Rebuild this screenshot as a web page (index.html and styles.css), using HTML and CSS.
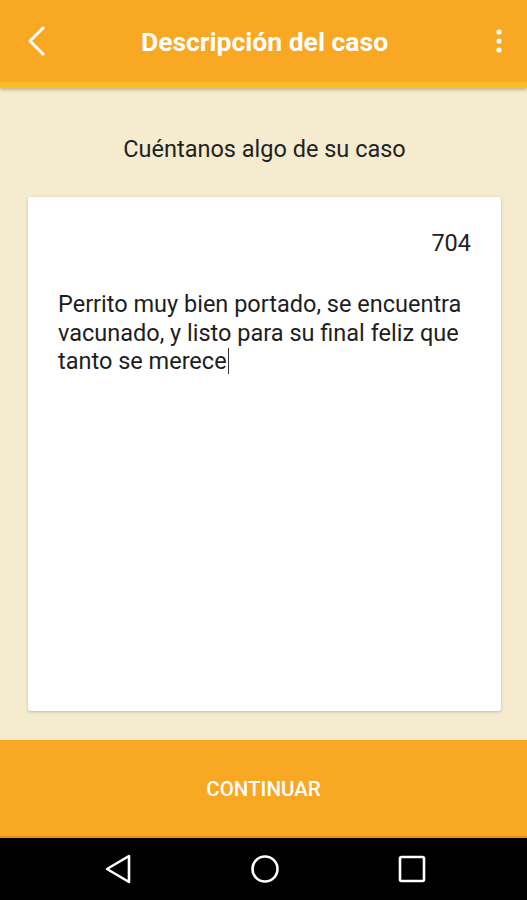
FILE: index.html
```html
<!DOCTYPE html>
<html lang="es">
<head>
    <meta charset="UTF-8">
    <meta name="viewport" content="width=device-width, initial-scale=1.0">
    <title>Descripción del caso</title>
    <link rel="stylesheet" href="styles.css">
</head>
<body>
    <div class="app">
        <header class="toolbar">
            <button class="icon-btn back" aria-label="Atrás">
                <svg width="22" height="30" viewBox="0 0 22 30">
                    <polyline points="17,2 4,15 17,28" fill="none" stroke="#fff" stroke-width="3" stroke-linecap="round" stroke-linejoin="round"/>
                </svg>
            </button>
            <h1 class="title">Descripción del caso</h1>
            <button class="icon-btn more" aria-label="Más opciones">
                <svg width="8" height="26" viewBox="0 0 8 26">
                    <circle cx="4" cy="4" r="2.6" fill="#fff"/>
                    <circle cx="4" cy="13" r="2.6" fill="#fff"/>
                    <circle cx="4" cy="22" r="2.6" fill="#fff"/>
                </svg>
            </button>
        </header>

        <main class="content">
            <p class="prompt">Cuéntanos algo de su caso</p>
            <div class="card">
                <div class="counter">704</div>
                <p class="description">Perrito muy bien portado, se encuentra vacunado, y listo para su final feliz que tanto se merece<span class="caret"></span></p>
            </div>
        </main>

        <button class="continue">CONTINUAR</button>

        <nav class="navbar">
            <svg width="30" height="30" viewBox="0 0 30 30">
                <polygon points="26,2 26,28 4,15" fill="none" stroke="#fff" stroke-width="2.6" stroke-linejoin="round"/>
            </svg>
            <svg width="30" height="30" viewBox="0 0 30 30">
                <circle cx="15" cy="15" r="12.5" fill="none" stroke="#fff" stroke-width="2.6"/>
            </svg>
            <svg width="30" height="30" viewBox="0 0 30 30">
                <rect x="3" y="3" width="24" height="24" rx="1.5" fill="none" stroke="#fff" stroke-width="2.6"/>
            </svg>
        </nav>
    </div>
</body>
</html>
```

FILE: styles.css
```css
* {
    box-sizing: border-box;
}
body {
    margin: 0;
    font-family: Roboto, 'Noto Sans', sans-serif;
    background-color: #f5ecd0;
}
.app {
    height: 900px;
    display: flex;
    flex-direction: column;
}
.toolbar {
    height: 88px;
    flex-shrink: 0;
    display: flex;
    align-items: center;
    padding: 0 18px 0 26px;
    background-color: #f8a823;
    border-bottom: 6px solid #fdbb27;
    box-shadow: 0 2px 3px rgba(120, 80, 0, 0.35);
    position: relative;
    z-index: 1;
}
.icon-btn {
    background: none;
    border: none;
    padding: 0;
    display: flex;
    align-items: center;
    justify-content: center;
}
.back {
    width: 22px;
}
.more {
    width: 20px;
}
.title {
    flex: 1;
    margin: 0 8px 0 0;
    text-align: center;
    color: #fff;
    font-size: 26.5px;
    font-weight: 700;
}
.content {
    flex: 1;
    padding: 44px 26px 29px 28px;
    display: flex;
    flex-direction: column;
}
.prompt {
    margin: 0 0 31px;
    text-align: center;
    font-size: 23.5px;
    color: #222;
    line-height: 34px;
}
.card {
    flex: 1;
    background-color: #fff;
    border-radius: 3px;
    box-shadow: 0 1px 3px rgba(80, 60, 20, 0.3);
    padding: 30px 30px 0 30px;
}
.counter {
    text-align: right;
    font-size: 23.5px;
    color: #222;
    line-height: 32px;
}
.description {
    margin: 31px 0 0;
    font-size: 23.5px;
    line-height: 28.5px;
    color: #1e1e1e;
}
.caret {
    display: inline-block;
    width: 1px;
    height: 26px;
    margin-left: 1px;
    vertical-align: -5px;
    background-color: #333;
}
.continue {
    height: 98px;
    flex-shrink: 0;
    border: none;
    background-color: #f8a823;
    color: #fff;
    font-family: Roboto, 'Noto Sans', sans-serif;
    font-size: 20.5px;
    font-weight: 500;
    padding-top: 2px;
    border-bottom: 2px solid #e4921a;
}
.navbar {
    height: 62px;
    flex-shrink: 0;
    background-color: #000;
    display: flex;
    align-items: center;
    justify-content: center;
    gap: 117px;
    padding-left: 2px;
}
```
